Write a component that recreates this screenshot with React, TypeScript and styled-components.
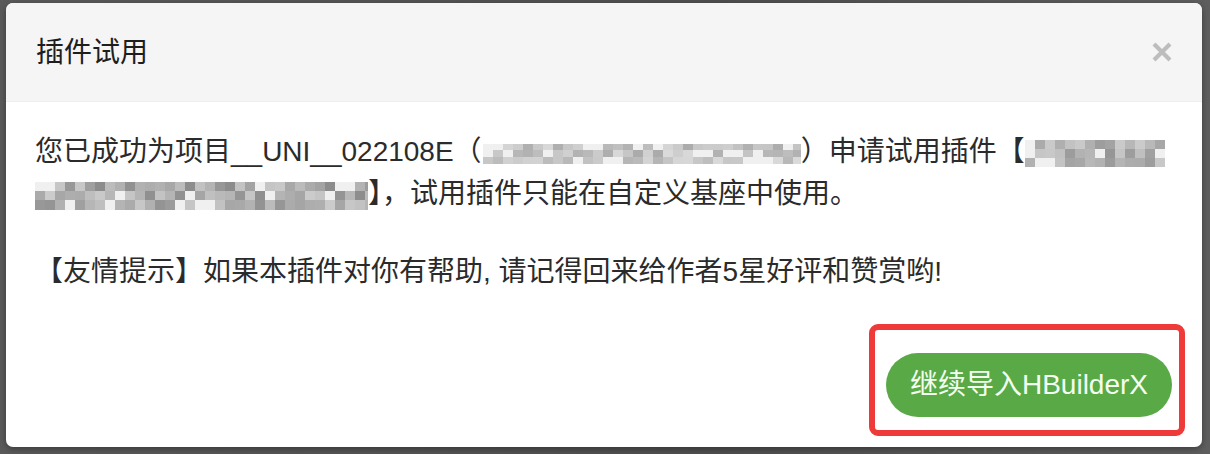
import React from 'react'
import styled, { createGlobalStyle } from 'styled-components'

// ── Global ─────────────────────────────────────────────────────────────────────

const GlobalStyle = createGlobalStyle`
  html, body {
    margin: 0;
    padding: 0;
    background: #565656;
  }
  body {
    font-family: "Liberation Sans", "Noto Sans CJK SC", sans-serif;
    color: #333;
  }
`

const FONT = `"Liberation Sans", "Noto Sans CJK SC", sans-serif`

// ── Dialog ─────────────────────────────────────────────────────────────────────

const Backdrop = styled.div`
  width: 1210px;
  height: 454px;
  padding: 3px 8px 0 6px;
  box-sizing: border-box;
  background: linear-gradient(90deg, #5a5a5a 0%, #4f4f4f 60%, #5e5e5e 100%);
`

const Dialog = styled.div`
  width: 1196px;
  background: #fff;
  border-radius: 7px;
  overflow: hidden;
  box-shadow: 0 2px 6px rgba(0, 0, 0, 0.35);
`

const Header = styled.div`
  height: 99px;
  box-sizing: border-box;
  padding: 0 30px;
  background: #f5f5f5;
  border-bottom: 1px solid #eeeeee;
  display: flex;
  align-items: center;
  justify-content: space-between;
`

const Title = styled.h4`
  margin: 0;
  font-family: ${FONT};
  font-size: 28px;
  font-weight: 400;
  color: #1e1e1e;
  line-height: 1;
  transform: translateY(1px);
`

const Close = styled.button`
  width: 24px;
  height: 24px;
  padding: 0;
  border: 0;
  background: transparent;
  color: #bdbdbd;
  display: flex;
  align-items: center;
  justify-content: center;
  margin-right: -2px;
  cursor: pointer;
`

const Body = styled.div`
  padding: 29px 29px 0;
  font-family: ${FONT};
  font-size: 28px;
  line-height: 42px;
  color: #2b2b2b;
`

const Para = styled.p<{ $gap?: number }>`
  margin: ${({ $gap }) => $gap ?? 0}px 0 0;
  white-space: nowrap;
`

const Footer = styled.div`
  margin-top: 60px;
  padding: 0 30px 30px;
  display: flex;
  justify-content: flex-end;
`

const Highlight = styled.div`
  position: relative;

  &::after {
    content: '';
    position: absolute;
    left: -17px;
    right: -13px;
    top: -29px;
    bottom: -19px;
    border: 6px solid #ef3a3a;
    border-radius: 9px;
    pointer-events: none;
  }
`

const PrimaryButton = styled.button`
  height: 64px;
  padding: 0 24px;
  border: 0;
  border-radius: 32px;
  background: #59a947;
  color: #f3fff0;
  font-family: ${FONT};
  font-size: 28px;
  line-height: 64px;
  white-space: nowrap;
  cursor: pointer;
`

// ── Mosaic (redacted text) ─────────────────────────────────────────────────────

const MosaicBox = styled.span<{ $w: number; $h: number }>`
  display: inline-grid;
  grid-auto-flow: column;
  grid-template-rows: repeat(3, 1fr);
  width: ${({ $w }) => $w}px;
  height: ${({ $h }) => $h}px;
  vertical-align: middle;
  overflow: hidden;
  filter: blur(0.7px);
`

const Cell = styled.span`
  display: block;
`

function Mosaic({ w, h, seed, light = 215, dark = 160 }: { w: number; h: number; seed: number; light?: number; dark?: number }) {
  const cols = Math.ceil(w / 10)
  let s = seed
  const rnd = () => {
    s = (s * 9301 + 49297) % 233280
    return s / 233280
  }
  const cells: number[] = []
  for (let c = 0; c < cols; c++) {
    for (let r = 0; r < 3; r++) {
      const v = rnd()
      const g = v > 0.82 ? 240 : Math.round(light - (light - dark) * rnd())
      cells.push(g)
    }
  }
  return (
    <MosaicBox $w={w} $h={h} style={{ gridTemplateColumns: `repeat(${cols}, 10px)` }}>
      {cells.map((g, i) => (
        <Cell key={i} style={{ background: `rgb(${g},${g},${g})` }} />
      ))}
    </MosaicBox>
  )
}

const Inline = styled.span<{ $ml?: number }>`
  margin-left: ${({ $ml }) => $ml ?? 0}px;
`

// ── Page ───────────────────────────────────────────────────────────────────────

export default function App() {
  return (
    <>
      <GlobalStyle />
      <Backdrop>
        <Dialog>
          <Header>
            <Title>插件试用</Title>
            <Close aria-label="关闭">
              <svg width="20" height="20" viewBox="0 0 20 20">
                <path d="M2 2 L18 18 M18 2 L2 18" stroke="currentColor" strokeWidth="4.2" />
              </svg>
            </Close>
          </Header>
          <Body>
            <Para>
              您已成功为项目__UNI__022108E（
              <Inline $ml={1}><Mosaic w={318} h={20} seed={17} light={218} dark={170} /></Inline>
              ）申请试用插件【
              <Inline $ml={0}><Mosaic w={140} h={27} seed={41} light={210} dark={150} /></Inline>
              <br />
              <Mosaic w={333} h={28} seed={93} light={205} dark={140} />
              】，试用插件只能在自定义基座中使用。
            </Para>
            <Para $gap={36}>【友情提示】如果本插件对你有帮助, 请记得回来给作者5星好评和赞赏哟!</Para>
          </Body>
          <Footer>
            <Highlight>
              <PrimaryButton>继续导入HBuilderX</PrimaryButton>
            </Highlight>
          </Footer>
        </Dialog>
      </Backdrop>
    </>
  )
}
